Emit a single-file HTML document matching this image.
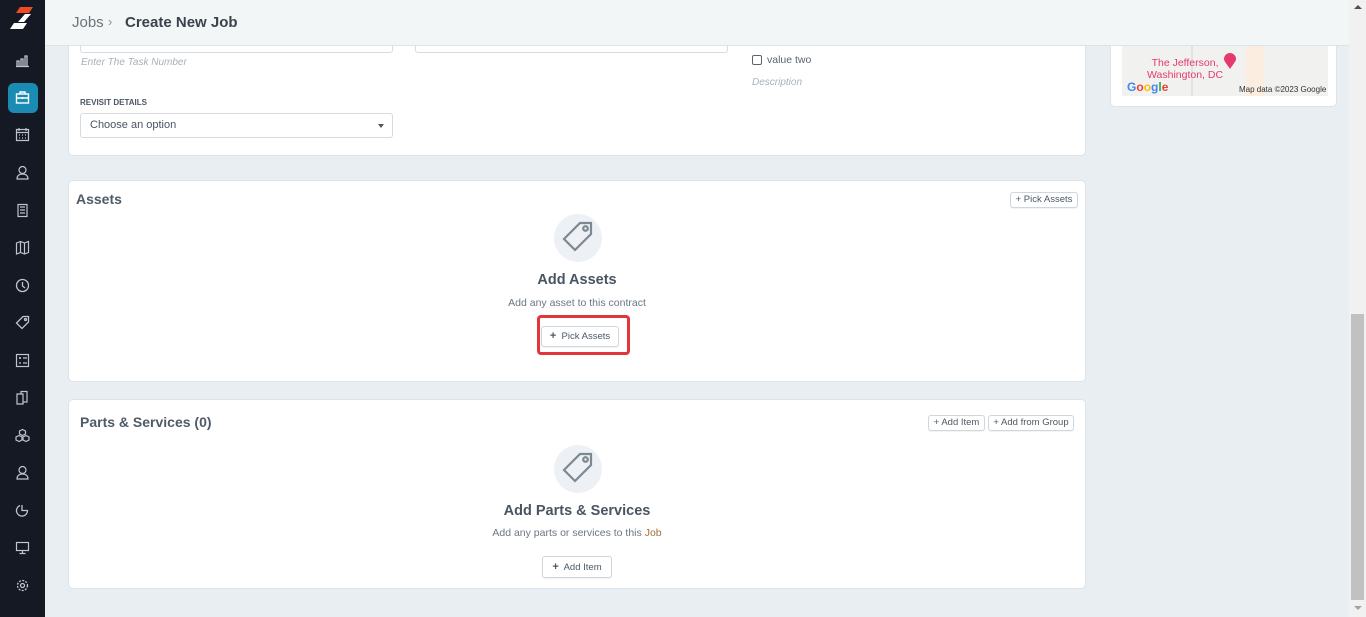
<!DOCTYPE html>
<html><head><style>
*{box-sizing:border-box;margin:0;padding:0}
body{width:1366px;height:617px;overflow:hidden;background:#e9eef2;font-family:"Liberation Sans",Arial,sans-serif;position:relative;color:#4a5562}
.a{position:absolute}
.side{left:0;top:0;width:45px;height:617px;background:#141923}
.ic{position:absolute;left:15px;width:15px;height:15px}
.card{background:#fff;border:1px solid #dde3e8;border-radius:5px;position:absolute}
.btn{position:absolute;border:1px solid #cfd6dc;border-radius:3px;background:#fff;font-size:9.5px;color:#4b5967;height:16px;line-height:14px;padding:0 3px;box-shadow:0 1px 1px rgba(0,0,0,.05);white-space:nowrap;text-align:center}
.circ{position:absolute;width:48px;height:48px;border-radius:50%;background:#edf1f5}
</style></head><body>
<div class="a side">
  <svg class="a" style="left:10px;top:6px" width="24" height="24" viewBox="0 0 24 24"><polygon points="10,1 23,1 19,7 6,7" fill="#f04a24"/><polygon points="15,8 21,8 14,16 8,16" fill="#fff"/><polygon points="4,17 17,17 13,23 0,23" fill="#fff"/></svg>
  <svg class="ic" style="top:53px" viewBox="0 0 15 15" fill="none" stroke="#bfc5cc" stroke-width="1.3"><path d="M2 13V8h2v5M6 13V6h2v7M10 13V3h2v10M1 13.5h13"/></svg>
  <div class="a" style="left:8px;top:83px;width:30px;height:30px;border-radius:6px;background:#1a8bb3"></div>
  <svg class="ic" style="top:90px" viewBox="0 0 15 15" fill="none" stroke="#fff" stroke-width="1.4"><rect x="1.5" y="4" width="12" height="9"/><path d="M5 4V2h5v2M1.5 8h12M7.5 7v2"/></svg>
  <svg class="ic" style="top:127px" viewBox="0 0 15 15" fill="none" stroke="#bfc5cc" stroke-width="1.2"><rect x="1.5" y="2.5" width="12" height="11"/><path d="M1.5 5.5h12M4 1v3M11 1v3M4 8h1M7 8h1M10 8h1M4 11h1M7 11h1M10 11h1"/></svg>
  <svg class="ic" style="top:165px" viewBox="0 0 15 15" fill="none" stroke="#bfc5cc" stroke-width="1.2"><circle cx="7.5" cy="5" r="3.5"/><path d="M2 14c0-3 2-5 5.5-5s5.5 2 5.5 5z"/></svg>
  <svg class="ic" style="top:203px" viewBox="0 0 15 15" fill="none" stroke="#bfc5cc" stroke-width="1.2"><rect x="3" y="1.5" width="9" height="12"/><path d="M5 4h5M5 7h5M5 10h5"/></svg>
  <svg class="ic" style="top:240px" viewBox="0 0 15 15" fill="none" stroke="#bfc5cc" stroke-width="1.2"><path d="M1.5 3l4-1.5 4 1.5 4-1.5v11l-4 1.5-4-1.5-4 1.5zM5.5 1.5v11M9.5 3v11"/></svg>
  <svg class="ic" style="top:278px" viewBox="0 0 15 15" fill="none" stroke="#bfc5cc" stroke-width="1.3"><circle cx="7.5" cy="7.5" r="6"/><path d="M7.5 4v4l2.5 2"/></svg>
  <svg class="ic" style="top:315px" viewBox="0 0 15 15" fill="none" stroke="#bfc5cc" stroke-width="1.3"><path d="M8 1.5h5.5V7L7 13.5 1.5 8z"/><circle cx="10.5" cy="4.5" r="1"/></svg>
  <svg class="ic" style="top:353px" viewBox="0 0 15 15" fill="none" stroke="#bfc5cc" stroke-width="1.2"><rect x="1.5" y="1.5" width="12" height="12"/><path d="M4 5h2M8 5h4M4 10h2M8 10h4M5 4v2"/></svg>
  <svg class="ic" style="top:390px" viewBox="0 0 15 15" fill="none" stroke="#bfc5cc" stroke-width="1.2"><path d="M2 4h6v10H2zM6 4V1.5h6V12H8"/></svg>
  <svg class="ic" style="top:428px" viewBox="0 0 15 15" fill="none" stroke="#bfc5cc" stroke-width="1.2"><path d="M7.5 1.5l3 1.5v3l-3 1.5-3-1.5V3zM4 7.5l3 1.5v3l-3 1.5-3-1.5V9zM11 7.5l3 1.5v3l-3 1.5-3-1.5V9z"/></svg>
  <svg class="ic" style="top:465px" viewBox="0 0 15 15" fill="none" stroke="#bfc5cc" stroke-width="1.2"><circle cx="7.5" cy="5" r="3.5"/><path d="M2 14c0-3 2-5 5.5-5s5.5 2 5.5 5z"/></svg>
  <svg class="ic" style="top:503px" viewBox="0 0 15 15" fill="none" stroke="#bfc5cc" stroke-width="1.3"><path d="M5 2.5A5.5 5.5 0 1 0 12.5 7.5H7V2M7 2"/></svg>
  <svg class="ic" style="top:540px" viewBox="0 0 15 15" fill="none" stroke="#bfc5cc" stroke-width="1.2"><rect x="1.5" y="2.5" width="12" height="8"/><path d="M7.5 10.5v3M4.5 13.5h6"/></svg>
  <svg class="ic" style="top:578px" viewBox="0 0 15 15" fill="none" stroke="#bfc5cc" stroke-width="1.3"><circle cx="7.5" cy="7.5" r="2"/><circle cx="7.5" cy="7.5" r="5" stroke-dasharray="2 1.3"/></svg>
</div>

<!-- map card -->
<div class="card" style="left:1110px;top:-5px;width:227px;height:112px">
  <div class="a" style="left:11px;top:5px;width:206px;height:95px;background:#f1f1ef"></div>
  <div class="a" style="left:135px;top:5px;width:18px;height:95px;background:#fbeee0"></div>
  <div class="a" style="left:80px;top:5px;width:2px;height:95px;background:#e2e2e2"></div>
  <div class="a" style="left:36px;top:61px;font-size:10.5px;color:#e63a6c;line-height:12px;text-align:center">The Jefferson,<br>Washington, DC</div>
  <svg class="a" style="left:113px;top:57px" width="12" height="17" viewBox="0 0 12 17"><path d="M6 16C2 10 0 8 0 6a6 6 0 0 1 12 0c0 2-2 4-6 10z" fill="#e63a6c"/></svg>
  <div class="a" style="left:16px;top:84px;font-size:12px;font-weight:bold;color:#4285f4">G<span style="color:#ea4335">o</span><span style="color:#fbbc05">o</span>g<span style="color:#34a853">l</span><span style="color:#ea4335">e</span></div>
  <div class="a" style="left:128px;top:89px;font-size:8px;color:#333">Map data ©2023 Google</div>
</div>

<!-- top card -->
<div class="card" style="left:68px;top:-10px;width:1018px;height:166px">
  <div class="a" style="left:11px;top:50px;width:313px;height:12px;border:1px solid #d5dbe0;border-top:none;border-radius:0 0 3px 3px"></div>
  <div class="a" style="left:346px;top:50px;width:313px;height:12px;border:1px solid #d5dbe0;border-top:none;border-radius:0 0 3px 3px"></div>
  <div class="a" style="left:12px;top:66px;font-size:10px;font-style:italic;color:#a8b0b8">Enter The Task Number</div>
  <div class="a" style="left:683px;top:64px;width:10px;height:10px;border:1px solid #5b6570;border-radius:2px"></div>
  <div class="a" style="left:698px;top:63px;font-size:10.5px;color:#5b6570">value two</div>
  <div class="a" style="left:683px;top:86px;font-size:10px;font-style:italic;color:#a8b0b8">Description</div>
  <div class="a" style="left:11px;top:107px;font-size:8px;font-weight:bold;color:#4a5562">REVISIT DETAILS</div>
  <div class="a" style="left:11px;top:122px;width:313px;height:25px;border:1px solid #d5dbe0;border-radius:3px;font-size:11px;color:#4a5562;line-height:23px;padding-left:9px">Choose an option
    <div class="a" style="right:8px;top:10px;border:3.5px solid transparent;border-top:4px solid #555"></div></div>
</div>

<!-- header -->
<div class="a" style="left:45px;top:0;width:1305px;height:46px;background:#f3f6f7;border-bottom:1px solid #dde3e6"></div>
<div class="a" style="left:72px;top:14px;font-size:15px;color:#6b737b">Jobs</div>
<div class="a" style="left:108px;top:14px;font-size:13px;color:#8a9198">›</div>
<div class="a" style="left:125px;top:14px;font-size:15px;font-weight:bold;color:#3a434c">Create New Job</div>

<!-- assets card -->
<div class="card" style="left:68px;top:180px;width:1018px;height:202px">
  <div class="a" style="left:7px;top:10px;font-size:14px;font-weight:bold;color:#4f5b67">Assets</div>
  <div class="btn" style="left:941px;top:11px;width:68px">+ Pick Assets</div>
  <div class="circ" style="left:485px;top:33px"></div>
  <svg class="a" style="left:491px;top:38px" width="36" height="36" viewBox="0 0 36 36" fill="none" stroke="#7d8893" stroke-width="2.2"><path d="M20 4h11v11L15 31 4 20z"/><circle cx="25.5" cy="9.5" r="2.3"/></svg>
  <div class="a" style="left:0;width:1016px;top:91px;text-align:center;font-size:14.5px;font-weight:bold;color:#4a5562">Add Assets</div>
  <div class="a" style="left:0;width:1016px;top:116px;text-align:center;font-size:10.5px;color:#6b7681">Add any asset to this contract</div>
  <div class="a" style="left:468px;top:134px;width:93px;height:40px;border:3px solid #e0363c;border-radius:4px"></div>
  <div class="btn" style="left:472px;top:145px;height:21px;line-height:19px;padding:0 6px;font-size:9.5px;width:78px"><b style="font-size:11px">+</b>&nbsp; Pick Assets</div>
</div>

<!-- parts card -->
<div class="card" style="left:68px;top:399px;width:1018px;height:190px">
  <div class="a" style="left:11px;top:14px;font-size:14px;font-weight:bold;color:#4f5b67">Parts &amp; Services (0)</div>
  <div class="btn" style="left:859px;top:15px;width:57px">+ Add Item</div>
  <div class="btn" style="left:919px;top:15px;width:86px">+ Add from Group</div>
  <div class="circ" style="left:485px;top:45px"></div>
  <svg class="a" style="left:491px;top:50px" width="36" height="36" viewBox="0 0 36 36" fill="none" stroke="#7d8893" stroke-width="2.2"><path d="M20 4h11v11L15 31 4 20z"/><circle cx="25.5" cy="9.5" r="2.3"/></svg>
  <div class="a" style="left:0;width:1016px;top:103px;text-align:center;font-size:14.5px;font-weight:bold;color:#4a5562">Add Parts &amp; Services</div>
  <div class="a" style="left:0;width:1016px;top:127px;text-align:center;font-size:10.5px;color:#6b7681">Add any parts or services to this <span style="color:#a0703a">Job</span></div>
  <div class="btn" style="left:473px;top:156px;height:22px;line-height:20px;padding:0 6px;width:70px"><b style="font-size:11px">+</b>&nbsp; Add Item</div>
</div>

<!-- scrollbar -->
<div class="a" style="left:1349px;top:0;width:17px;height:617px;background:#f1f1f1"></div>
<div class="a" style="left:1351px;top:314px;width:13px;height:286px;background:#c1c1c1"></div>
<div class="a" style="left:1354px;top:5px;border:4px solid transparent;border-bottom:4px solid #505050;border-top:none"></div>
<div class="a" style="left:1354px;top:606px;border:4px solid transparent;border-top:4px solid #a3a3a3;border-bottom:none"></div>
</body></html>
